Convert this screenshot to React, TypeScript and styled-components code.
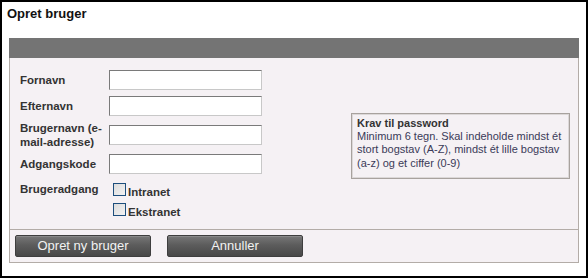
import React from "react";
import styled, { createGlobalStyle } from "styled-components";

const GlobalStyle = createGlobalStyle`
  html, body { margin: 0; padding: 0; background: #fff; }
  body { font-family: "Liberation Sans", Arial, sans-serif; }
  * { box-sizing: border-box; }
`;

const Frame = styled.div`
  width: 588px;
  height: 278px;
  border: 2px solid #000;
  background: #fff;
  padding: 4px 0 0 5px;
`;

const Title = styled.h1`
  margin: 0;
  font-size: 13px;
  line-height: 16px;
  font-weight: bold;
  color: #111;
`;

const Card = styled.div`
  width: 570px;
  margin: 16px 0 0 2px;
`;

const HeaderBar = styled.div`
  height: 20px;
  background: #747474;
`;

const Body = styled.div`
  border: 1px solid #b3aca7;
  border-top: none;
  background: #f5f1f4;
`;

const FormSection = styled.div`
  display: flex;
  align-items: flex-start;
  padding: 9px 8px 8px 10px;
  border-bottom: 1px solid #b3aca7;
`;

const Fields = styled.div`
  display: flex;
  flex-direction: column;
`;

const Row = styled.div<{ $h?: number; $top?: boolean }>`
  display: flex;
  align-items: ${(p) => (p.$top ? "flex-start" : "center")};
  min-height: ${(p) => (p.$h ? `${p.$h}px` : "auto")};
`;

const Label = styled.label<{ $mt?: number }>`
  width: 89px;
  flex: none;
  font-size: 11.5px;
  line-height: 14px;
  font-weight: bold;
  color: #333;
  margin-top: ${(p) => (p.$mt ? `${p.$mt}px` : "0")};
`;

const TextInput = styled.input`
  width: 153px;
  height: 20px;
  margin: 0;
  padding: 1px 3px;
  border: 1px solid;
  border-color: #7a7a7a #c8c8c8 #c8c8c8 #7a7a7a;
  background: #fff;
  font-family: "Liberation Sans", Arial, sans-serif;
  font-size: 12px;
`;

const CheckList = styled.div`
  display: flex;
  flex-direction: column;
  padding: 4px 0 0 4px;
`;

const CheckItem = styled.label`
  display: flex;
  align-items: flex-start;
  height: 20px;
`;

const Box = styled.span`
  width: 13px;
  height: 13px;
  margin-top: 2px;
  border: 1px solid #1d4e7c;
  background: linear-gradient(135deg, #dcdcdc 0%, #f2f2f2 100%);
  flex: none;
`;

const CheckText = styled.span`
  margin: 4px 0 0 2px;
  font-size: 11.5px;
  line-height: 14px;
  font-weight: bold;
  color: #333;
`;

const PasswordBox = styled.div`
  margin: 46px 0 0 auto;
  width: 219px;
  height: 66px;
  border: 1px solid #a8a29e;
  box-shadow: inset 0 0 0 1px #dcd8d8;
  padding: 3px 2px 0 5px;
  font-size: 11px;
  line-height: 13.2px;
  white-space: nowrap;
`;

const PasswordTitle = styled.div`
  font-weight: bold;
  color: #333;
`;

const PasswordText = styled.div`
  color: #3a3a58;
`;

const ButtonBar = styled.div`
  display: flex;
  gap: 16px;
  padding: 5px;
`;

const Button = styled.button`
  width: 136px;
  height: 22px;
  margin: 0;
  padding: 0;
  border: 1px solid #3e3e3e;
  border-radius: 2px;
  background: linear-gradient(180deg, #777 0%, #5c5c5c 45%, #484848 100%);
  box-shadow: inset 0 1px 0 rgba(255, 255, 255, 0.15);
  color: #f2f2f2;
  font-family: "Liberation Sans", Arial, sans-serif;
  font-size: 13px;
  line-height: 20px;
  cursor: pointer;
`;

const fields = [
  { label: "Fornavn", h: 26 },
  { label: "Efternavn", h: 26 },
  { label: "Brugernavn (e-mail-adresse)", h: 32 },
  { label: "Adgangskode", h: 26 },
];

export default function App() {
  return (
    <>
      <GlobalStyle />
      <Frame>
        <Title>Opret bruger</Title>
        <Card>
          <HeaderBar />
          <Body>
            <FormSection>
              <Fields>
                {fields.map((f) => (
                  <Row key={f.label} $h={f.h}>
                    <Label>{f.label}</Label>
                    <TextInput type={f.label === "Adgangskode" ? "password" : "text"} />
                  </Row>
                ))}
                <Row $top>
                  <Label $mt={4.5}>Brugeradgang</Label>
                  <CheckList>
                    <CheckItem>
                      <Box />
                      <CheckText>Intranet</CheckText>
                    </CheckItem>
                    <CheckItem>
                      <Box />
                      <CheckText>Ekstranet</CheckText>
                    </CheckItem>
                  </CheckList>
                </Row>
              </Fields>
              <PasswordBox>
                <PasswordTitle>Krav til password</PasswordTitle>
                <PasswordText>
                  Minimum 6 tegn. Skal indeholde mindst ét
                  <br />
                  stort bogstav (A-Z), mindst ét lille bogstav
                  <br />
                  (a-z) og et ciffer (0-9)
                </PasswordText>
              </PasswordBox>
            </FormSection>
            <ButtonBar>
              <Button>Opret ny bruger</Button>
              <Button>Annuller</Button>
            </ButtonBar>
          </Body>
        </Card>
      </Frame>
    </>
  );
}
